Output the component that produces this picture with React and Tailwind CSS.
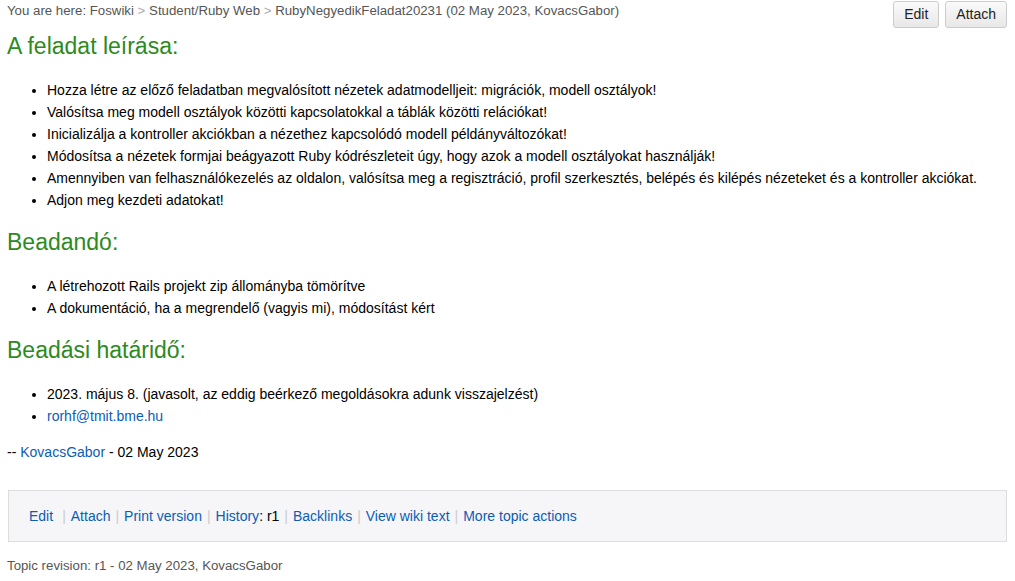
import React from "react";

const Sep = () => <span className="text-[#ccc] mx-[5px]">|</span>;

const Heading = ({ children }) => (
  <h2 className="text-[23px] leading-[30px] text-[#2d8a1e] font-normal">
    {children}
  </h2>
);

const Bullets = ({ items }) => (
  <ul className="list-disc pl-[40px] mt-[18px] mb-[12px] marker:text-[13px]">
    {items.map((item, i) => (
      <li key={i} className="leading-[22px]">
        {item}
      </li>
    ))}
  </ul>
);

export default function App() {
  return (
    <div
      className="bg-white text-black text-[14px] px-[7px] min-h-[581px]"
      style={{ fontFamily: '"Liberation Sans", Arial, sans-serif' }}
    >
      <div className="flex justify-between items-start">
        <div className="text-[13.25px] text-[#555] pt-[3px] leading-[16px]">
          You are here: Foswiki <span className="text-[#aaa]">&gt;</span> Student/Ruby Web{" "}
          <span className="text-[#aaa]">&gt;</span> RubyNegyedikFeladat20231 (02 May 2023, KovacsGabor)
        </div>
        <div className="flex gap-[6px] pt-px pr-px">
          {["Edit", "Attach"].map((b) => (
            <button
              key={b}
              className="h-[27px] px-[10px] text-[14px] text-[#222] border border-[#ccc] rounded-[3px] bg-gradient-to-b from-[#fafafa] to-[#e8e8e8]"
            >
              {b}
            </button>
          ))}
        </div>
      </div>

      <div className="mt-[3px]">
        <Heading>A feladat leírása:</Heading>
        <Bullets
          items={[
            "Hozza létre az előző feladatban megvalósított nézetek adatmodelljeit: migrációk, modell osztályok!",
            "Valósítsa meg modell osztályok közötti kapcsolatokkal a táblák közötti relációkat!",
            "Inicializálja a kontroller akciókban a nézethez kapcsolódó modell példányváltozókat!",
            "Módosítsa a nézetek formjai beágyazott Ruby kódrészleteit úgy, hogy azok a modell osztályokat használják!",
            "Amennyiben van felhasználókezelés az oldalon, valósítsa meg a regisztráció, profil szerkesztés, belépés és kilépés nézeteket és a kontroller akciókat.",
            "Adjon meg kezdeti adatokat!",
          ]}
        />
        <div className="mt-[16px]">
          <Heading>Beadandó:</Heading>
        </div>
        <Bullets
          items={[
            "A létrehozott Rails projekt zip állományba tömörítve",
            "A dokumentáció, ha a megrendelő (vagyis mi), módosítást kért",
          ]}
        />
        <div className="mt-[16px]">
          <Heading>Beadási határidő:</Heading>
        </div>
        <Bullets
          items={[
            "2023. május 8. (javasolt, az eddig beérkező megoldásokra adunk visszajelzést)",
            <a className="text-[#0b5cb5]">rorhf@tmit.bme.hu</a>,
          ]}
        />
        <p className="leading-[22px] mt-[14px]">
          -- <a className="text-[#0b5cb5]">KovacsGabor</a> - 02 May 2023
        </p>
      </div>

      <div className="mt-[27px] mx-px border border-[#ddd] bg-[#f6f6f8] h-[52px] flex items-center pl-[20px] text-[#0b5cb5]">
        <span>Edit</span>
        <span className="w-[4px]" />
        <Sep />
        <span>Attach</span>
        <Sep />
        <span>Print version</span>
        <Sep />
        <span>
          History<span className="text-black">: r1</span>
        </span>
        <Sep />
        <span>Backlinks</span>
        <Sep />
        <span>View wiki text</span>
        <Sep />
        <span>More topic actions</span>
      </div>

      <div className="text-[13.25px] text-[#555] mt-[16px] leading-[16px]">
        Topic revision: r1 - 02 May 2023, KovacsGabor
      </div>
    </div>
  );
}
